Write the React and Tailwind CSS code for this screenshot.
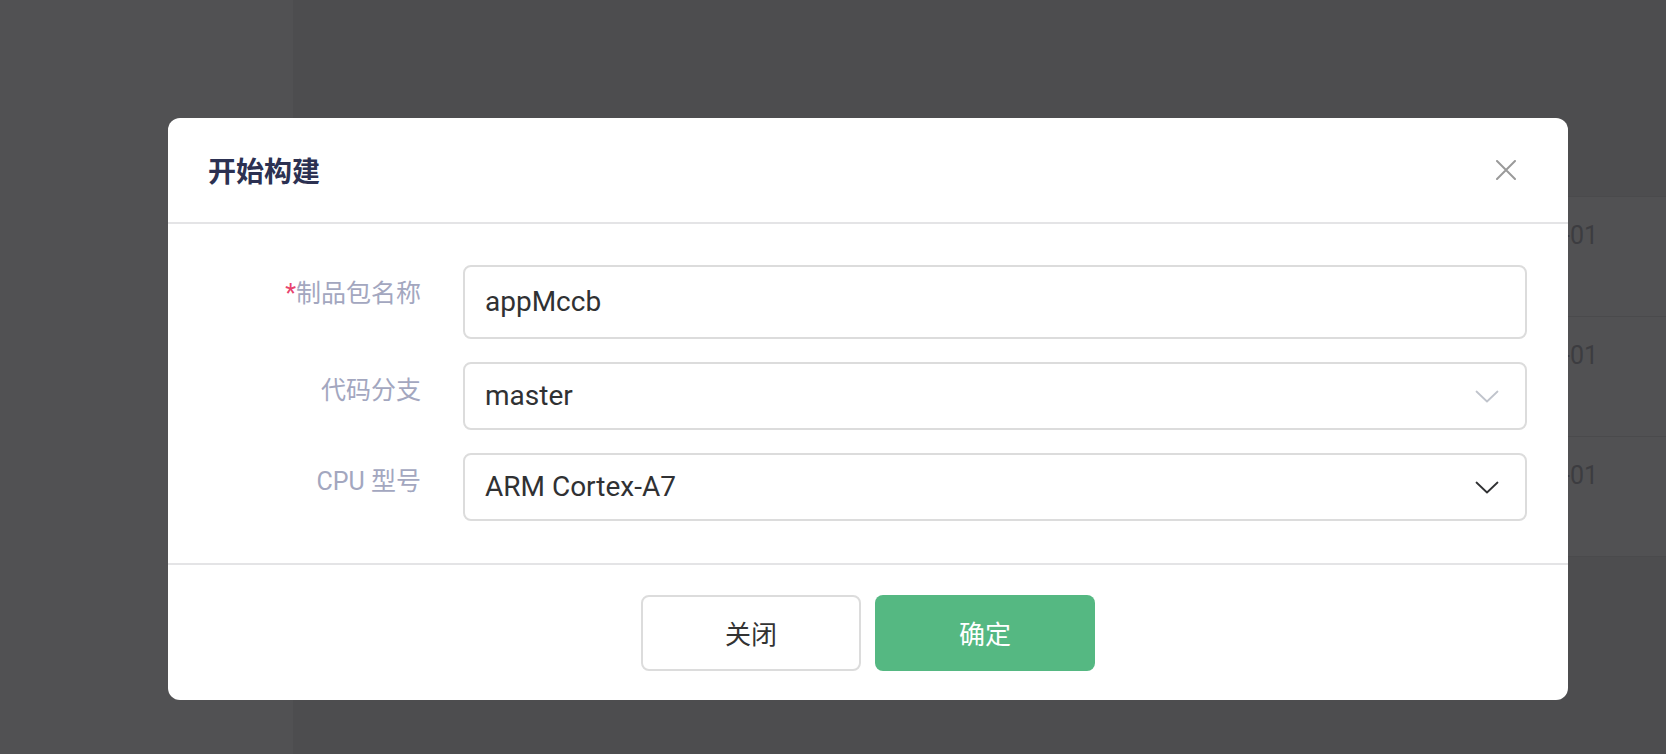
import React from "react";

function Chevron({ color }) {
  return (
    <svg width="24" height="13" viewBox="0 0 24 13" fill="none">
      <path d="M1.5 1.5 L12 11.5 L22.5 1.5" stroke={color} strokeWidth="1.8" strokeLinecap="round" strokeLinejoin="round" />
    </svg>
  );
}

function Label({ children }) {
  return (
    <div className="w-[253px] shrink-0 text-right pt-[11px] text-[25px] leading-[36px] text-[#a3a7bf]">
      {children}
    </div>
  );
}

export default function App() {
  const rows = ["2023-08-01", "2023-08-01", "2023-08-01"];
  return (
    <div className="relative w-[1666px] h-[754px] overflow-hidden bg-[#4d4d4f] font-[Roboto,'Noto_Sans_CJK_SC',sans-serif]">
      {/* background page */}
      <div className="flex h-full">
        <div className="w-[293px] h-full bg-[#515153]" />
        <div className="flex-1 pt-[196px]">
          <div className="bg-[#515153] border-t border-[#4a4a4c]">
            {rows.map((r, i) => (
              <div
                key={i}
                className="h-[120px] border-b border-[#4a4a4c] flex justify-end pr-[68px] pt-[24px] text-[25px] leading-[30px] text-[#3c3c40]"
              >
                {r}
              </div>
            ))}
          </div>
        </div>
      </div>

      {/* modal overlay */}
      <div className="absolute inset-0 pl-[168px] pt-[118px]">
        <div className="w-[1400px] bg-white rounded-xl">
          {/* header */}
          <div className="h-[106px] flex items-center justify-between pl-[40px] pr-[52px] border-b-2 border-[#e4e4e6]">
            <div className="text-[28px] font-bold text-[#2c3152] font-['Noto_Sans_CJK_SC',sans-serif]">
              开始构建
            </div>
            <svg width="20" height="20" viewBox="0 0 20 20" fill="none">
              <path d="M1 1 L19 19 M19 1 L1 19" stroke="#9a9a9a" strokeWidth="2" strokeLinecap="round" />
            </svg>
          </div>

          {/* body */}
          <div className="pt-[41px] pb-[42px] pr-[41px] flex flex-col gap-[23px]">
            <div className="flex">
              <Label>
                <span className="text-[#e8436d]">*</span>制品包名称
              </Label>
              <div className="ml-[42px] flex-1 h-[74px] border-2 border-[#dcdcdc] rounded-lg flex items-center pl-[20px] text-[28px] text-[#303133]">
                appMccb
              </div>
            </div>
            <div className="flex">
              <Label>代码分支</Label>
              <div className="ml-[42px] flex-1 h-[68px] border-2 border-[#dcdcdc] rounded-lg flex items-center justify-between pl-[20px] pr-[26px] text-[28px] text-[#303133]">
                <span>master</span>
                <Chevron color="#c0c4cc" />
              </div>
            </div>
            <div className="flex">
              <Label>CPU 型号</Label>
              <div className="ml-[42px] flex-1 h-[68px] border-2 border-[#dcdcdc] rounded-lg flex items-center justify-between pl-[20px] pr-[26px] text-[28px] text-[#303133]">
                <span>ARM Cortex-A7</span>
                <Chevron color="#303133" />
              </div>
            </div>
          </div>

          {/* footer */}
          <div className="h-[137px] border-t-2 border-[#e4e4e6] flex items-center justify-center gap-[14px]">
            <button className="w-[220px] h-[76px] rounded-lg border-2 border-[#dcdcdc] bg-white text-[26px] text-[#333333] font-['Noto_Sans_CJK_SC',sans-serif]">
              关闭
            </button>
            <button className="w-[220px] h-[76px] rounded-lg bg-[#55b882] text-[26px] text-white font-['Noto_Sans_CJK_SC',sans-serif]">
              确定
            </button>
          </div>
        </div>
      </div>
    </div>
  );
}
